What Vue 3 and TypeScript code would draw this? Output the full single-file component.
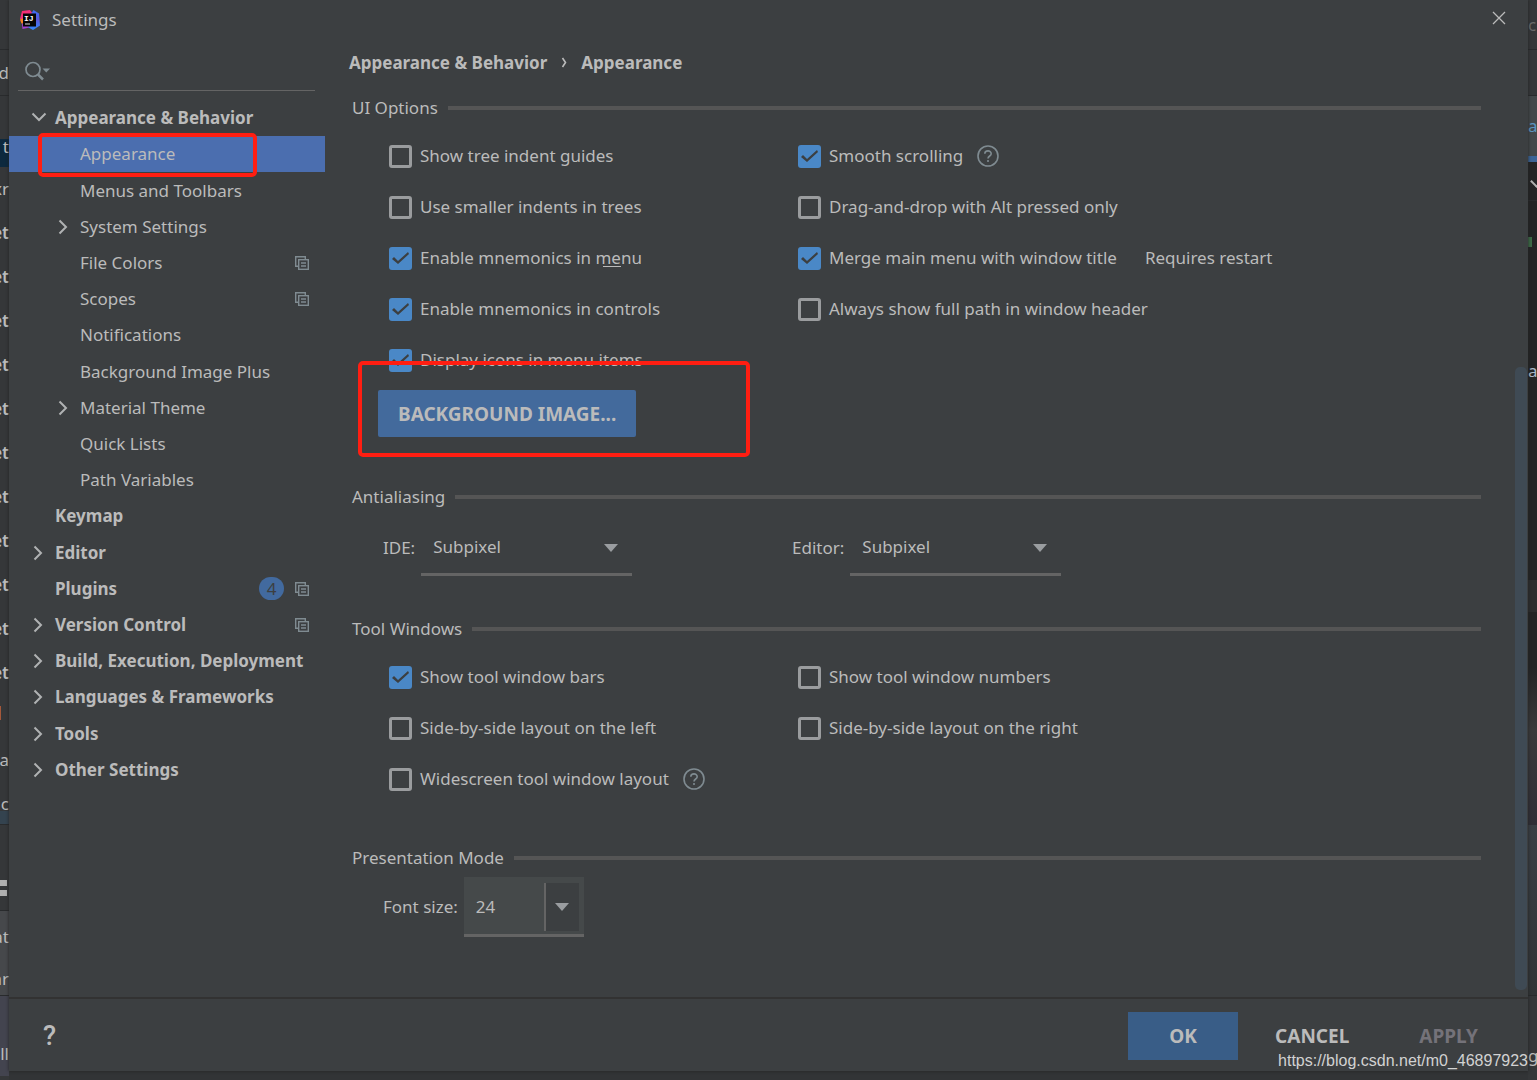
<script setup lang="ts">
import { ref } from 'vue'

interface TreeItem {
  label: string
  level: 0 | 1
  arrow?: 'open' | 'closed'
  copy?: boolean
  badge?: number
}

interface Option {
  id: string
  label: string
  checked: boolean
  help?: boolean
  note?: string
  mnemonic?: [string, string, string]
}

interface Strip {
  height: number
  text?: string
  kind?: string
}

const selected = ref('Appearance')
const query = ref('')
const ideAntialiasing = ref('Subpixel')
const editorAntialiasing = ref('Subpixel')
const fontSize = ref('24')

const tree: TreeItem[] = [
  { label: 'Appearance & Behavior', level: 0, arrow: 'open' },
  { label: 'Appearance', level: 1 },
  { label: 'Menus and Toolbars', level: 1 },
  { label: 'System Settings', level: 1, arrow: 'closed' },
  { label: 'File Colors', level: 1, copy: true },
  { label: 'Scopes', level: 1, copy: true },
  { label: 'Notifications', level: 1 },
  { label: 'Background Image Plus', level: 1 },
  { label: 'Material Theme', level: 1, arrow: 'closed' },
  { label: 'Quick Lists', level: 1 },
  { label: 'Path Variables', level: 1 },
  { label: 'Keymap', level: 0 },
  { label: 'Editor', level: 0, arrow: 'closed' },
  { label: 'Plugins', level: 0, copy: true, badge: 4 },
  { label: 'Version Control', level: 0, arrow: 'closed', copy: true },
  { label: 'Build, Execution, Deployment', level: 0, arrow: 'closed' },
  { label: 'Languages & Frameworks', level: 0, arrow: 'closed' },
  { label: 'Tools', level: 0, arrow: 'closed' },
  { label: 'Other Settings', level: 0, arrow: 'closed' },
]

const uiLeft = ref<Option[]>([
  { id: 'guides', label: 'Show tree indent guides', checked: false },
  { id: 'indents', label: 'Use smaller indents in trees', checked: false },
  { id: 'mn-menu', label: 'Enable mnemonics in menu', checked: true, mnemonic: ['Enable mnemonics in ', 'me', 'nu'] },
  { id: 'mn-controls', label: 'Enable mnemonics in controls', checked: true },
  { id: 'icons', label: 'Display icons in menu items', checked: true },
])

const uiRight = ref<Option[]>([
  { id: 'smooth', label: 'Smooth scrolling', checked: true, help: true },
  { id: 'dnd', label: 'Drag-and-drop with Alt pressed only', checked: false },
  { id: 'merge', label: 'Merge main menu with window title', checked: true, note: 'Requires restart' },
  { id: 'full-path', label: 'Always show full path in window header', checked: false },
])

const toolLeft = ref<Option[]>([
  { id: 'bars', label: 'Show tool window bars', checked: true },
  { id: 'side-left', label: 'Side-by-side layout on the left', checked: false },
  { id: 'wide', label: 'Widescreen tool window layout', checked: false, help: true },
])

const toolRight = ref<Option[]>([
  { id: 'numbers', label: 'Show tool window numbers', checked: false },
  { id: 'side-right', label: 'Side-by-side layout on the right', checked: false },
])

const leftStrips: Strip[] = [
  { height: 50, kind: 'line' },
  { height: 46, text: 'd', kind: 'line' },
  { height: 43 },
  { height: 28, text: 't', kind: 'selected raised' },
  { height: 44, text: 'xr' },
  ...Array.from({ length: 11 }, () => ({ height: 44, text: 'et', kind: 'bold' })),
  { height: 11 },
  { height: 14, kind: 'change' },
  { height: 16 },
  { height: 48, text: 'ra' },
  { height: 41, text: 'nc', kind: 'blue line' },
  { height: 54 },
  { height: 18, kind: 'squares' },
  { height: 14, kind: 'line' },
  { height: 52, text: 'at', kind: 'light' },
  { height: 33, text: 'nr', kind: 'light line' },
  { height: 36, kind: 'violet' },
  { height: 44, text: 'll', kind: 'violet' },
]

const rightStrips: Strip[] = [
  { height: 50, text: 'ce', kind: 'faint line' },
  { height: 46, kind: 'line' },
  { height: 60, text: 'a', kind: 'tab' },
  { height: 6, kind: 'tab-line' },
  { height: 39, kind: 'dark line check' },
  { height: 36, kind: 'dark' },
  { height: 10, kind: 'dark green' },
  { height: 98, kind: 'dark' },
  { height: 52, text: 'a', kind: 'dark code' },
  { height: 183, kind: 'dark' },
  { height: 32, kind: 'caret-row' },
  { height: 55, kind: 'dark' },
  { height: 158, kind: 'shade' },
  { height: 171, kind: 'slate line' },
  { height: 36 },
  { height: 48, text: 'g' },
]
</script>

<template>
  <div class="desktop">
    <div class="edge edge-left" aria-hidden="true">
      <div
        v-for="(s, i) in leftStrips"
        :key="i"
        class="strip"
        :class="s.kind"
        :style="{ height: s.height + 'px' }"
      >{{ s.text }}</div>
    </div>

    <main class="dialog">
      <header class="titlebar">
        <svg class="logo" viewBox="0 0 20 20" width="20" height="20" aria-hidden="true">
          <defs>
            <linearGradient id="lg-pink" x1="0" y1="0" x2="1" y2="1">
              <stop offset="0" stop-color="#ff2d6b" />
              <stop offset="1" stop-color="#e0338f" />
            </linearGradient>
            <linearGradient id="lg-blue" x1="0" y1="0" x2="0" y2="1">
              <stop offset="0" stop-color="#3d6df5" />
              <stop offset="0.5" stop-color="#5b57d8" />
              <stop offset="1" stop-color="#2f8cff" />
            </linearGradient>
          </defs>
          <path d="M2 1 L10 0 L13 4 L4 11 L0 9 Z" fill="url(#lg-pink)" />
          <path d="M0 9.500 L4 8 L5 14 L1.500 13.500 Z" fill="#fc801d" />
          <path d="M2 14 L5 12 L14 15 L12 17 L2.500 19 Z" fill="#a63fd0" />
          <path d="M13.500 0 L19 3.500 L20 15.500 L13 20 L8.500 17.500 L11 4 Z" fill="url(#lg-blue)" />
          <rect x="3" y="3.500" width="13" height="13" fill="#050505" />
          <text x="4" y="10.500" class="logo-text">IJ</text>
          <rect x="5" y="13.500" width="5" height="1" fill="#d8d8d8" />
        </svg>
        <h1>Settings</h1>
        <button class="close" type="button" aria-label="Close">
          <svg viewBox="0 0 12 12" width="12" height="12"><path d="M0 0 L12 12 M12 0 L0 12" /></svg>
        </button>
      </header>

      <div class="body">
        <aside class="sidebar">
          <label class="search">
            <svg viewBox="0 0 26 20" width="26" height="20" aria-hidden="true">
              <circle cx="8" cy="8.500" r="7" />
              <path d="M13 13.500 L18 18.500" class="handle" />
              <path d="M17.500 7.500 H25 L21.250 11.500 Z" class="caret" />
            </svg>
            <input v-model="query" type="text" aria-label="Search settings" />
          </label>

          <nav class="tree">
            <button
              v-for="item in tree"
              :key="item.label"
              type="button"
              class="node"
              :class="{ child: item.level === 1, selected: item.label === selected }"
              @click="selected = item.label"
            >
              <span class="arrow">
                <svg v-if="item.arrow === 'closed'" viewBox="0 0 16 16" width="16" height="16">
                  <path d="M5.500 1.500 L12 8 L5.500 14.500" />
                </svg>
                <svg v-else-if="item.arrow === 'open'" viewBox="0 0 16 16" width="16" height="16">
                  <path d="M3.500 3.500 L10 10 L16.500 3.500" />
                </svg>
              </span>
              <span class="node-label">{{ item.label }}</span>
              <span v-if="item.badge" class="badge">{{ item.badge }}</span>
              <svg v-if="item.copy" class="copy" viewBox="0 0 14 14" width="14" height="14">
                <path d="M3 10.300 H0.700 V0.700 H10.300 V3" />
                <rect x="3.700" y="3.700" width="9.600" height="9.600" />
                <path d="M6 7 H11 M6 10 H11" />
              </svg>
            </button>
            <span class="mark mark-tree"></span>
          </nav>
        </aside>

        <section class="content">
          <div class="crumbs">
            <span>Appearance &amp; Behavior</span>
            <svg viewBox="0 0 6 12" width="6" height="12" aria-hidden="true"><path d="M1.500 1 L4.500 5.500 L1.500 10" /></svg>
            <span>Appearance</span>
          </div>

          <section class="group">
            <h2>UI Options</h2>
            <div class="columns">
              <div v-for="(col, c) in [uiLeft, uiRight]" :key="c" class="column">
                <div v-for="o in col" :key="o.id" class="option">
                  <input :id="o.id" v-model="o.checked" type="checkbox" />
                  <label v-if="o.mnemonic" :for="o.id">{{ o.mnemonic[0] }}<span class="mnemonic">{{ o.mnemonic[1] }}</span>{{ o.mnemonic[2] }}</label>
                  <label v-else :for="o.id">{{ o.label }}</label>
                  <svg v-if="o.help" class="help" viewBox="0 0 22 22" width="22" height="22">
                    <circle cx="11" cy="10" r="10" />
                    <path d="M7.800 7.800 C7.800 3.900 14.200 3.900 14.200 7.700 C14.200 10 11 10 11 12.500" />
                    <path d="M11 14 V16" />
                  </svg>
                  <span v-if="o.note" class="note">{{ o.note }}</span>
                </div>
              </div>
            </div>
            <button class="background-button" type="button">BACKGROUND IMAGE...</button>
            <span class="mark mark-button"></span>
          </section>

          <section class="group">
            <h2>Antialiasing</h2>
            <div class="columns">
              <div class="field">
                <label for="aa-ide">IDE:</label>
                <span class="combo">
                  <select id="aa-ide" v-model="ideAntialiasing">
                    <option>Subpixel</option>
                    <option>Greyscale</option>
                  </select>
                  <svg class="drop" viewBox="0 0 14 8" width="14" height="8"><path d="M0 0 H14 L7 8 Z" /></svg>
                </span>
              </div>
              <div class="field">
                <label for="aa-editor">Editor:</label>
                <span class="combo">
                  <select id="aa-editor" v-model="editorAntialiasing">
                    <option>Subpixel</option>
                    <option>Greyscale</option>
                  </select>
                  <svg class="drop" viewBox="0 0 14 8" width="14" height="8"><path d="M0 0 H14 L7 8 Z" /></svg>
                </span>
              </div>
            </div>
          </section>

          <section class="group">
            <h2>Tool Windows</h2>
            <div class="columns">
              <div v-for="(col, c) in [toolLeft, toolRight]" :key="c" class="column">
                <div v-for="o in col" :key="o.id" class="option">
                  <input :id="o.id" v-model="o.checked" type="checkbox" />
                  <label :for="o.id">{{ o.label }}</label>
                  <svg v-if="o.help" class="help" viewBox="0 0 22 22" width="22" height="22">
                    <circle cx="11" cy="10" r="10" />
                    <path d="M7.800 7.800 C7.800 3.900 14.200 3.900 14.200 7.700 C14.200 10 11 10 11 12.500" />
                    <path d="M11 14 V16" />
                  </svg>
                </div>
              </div>
            </div>
          </section>

          <section class="group compact">
            <h2>Presentation Mode</h2>
            <div class="field">
              <label for="font-size">Font size:</label>
              <span class="spin">
                <input id="font-size" v-model="fontSize" type="text" />
                <button type="button" aria-label="Choose font size">
                  <svg viewBox="0 0 14 8" width="14" height="8"><path d="M0 0 H14 L7 8 Z" /></svg>
                </button>
              </span>
            </div>
          </section>
          <span class="thumb"></span>
        </section>
      </div>

      <footer class="footer">
        <button class="question" type="button" aria-label="Help">?</button>
        <button class="action primary" type="button">OK</button>
        <button class="action" type="button">CANCEL</button>
        <button class="action" type="button" disabled>APPLY</button>
      </footer>
      <span class="watermark">https://blog.csdn.net/m0_46897923</span>
    </main>

    <div class="edge edge-right" aria-hidden="true">
      <div
        v-for="(s, i) in rightStrips"
        :key="i"
        class="strip"
        :class="s.kind"
        :style="{ height: s.height + 'px' }"
      >{{ s.text }}</div>
    </div>
  </div>
</template>

<style>
body {
  background: #323436;
}
</style>

<style scoped>
.desktop {
  display: flex;
  min-height: 100vh;
  overflow: hidden;
  background: #323436;
  color: #bbbbbb;
  font-family: 'Noto Sans', 'Open Sans', sans-serif;
  font-size: 17px;
  line-height: 24px;
}

.desktop *,
.desktop *::before {
  box-sizing: border-box;
}

button,
input,
select {
  margin: 0;
  padding: 0;
  border: 0;
  border-radius: 0;
  outline: 0;
  background: none;
  color: inherit;
  font: inherit;
}

svg {
  flex: none;
  display: block;
  overflow: visible;
  fill: none;
}

/* Slices of the editor window that show on both sides of the dialog */
.edge {
  flex: 0 0 9px;
  overflow: hidden;
  background: #353739;
}

.strip {
  display: flex;
  align-items: center;
  justify-content: flex-end;
  overflow: hidden;
  white-space: nowrap;
}

.edge-right .strip {
  justify-content: flex-start;
}

.line {
  border-bottom: 1px solid #292b2d;
}

.bold {
  font-weight: 600;
}

.selected.strip {
  background: #0d293e;
}

.raised {
  align-items: flex-start;
  line-height: 16px;
}

.change {
  border-left: 1px solid #a5583a;
}

.blue {
  background: linear-gradient(#353739 27px, #34434f 27px);
}

.squares::before {
  content: '';
  flex: none;
  width: 7px;
  height: 16px;
  margin-right: 2px;
  border: solid #b0b0b0;
  border-width: 6px 0;
}

.light {
  background: #46484b;
}

.violet {
  background: #43444f;
}

.faint {
  color: #6a6a6a;
}

.tab {
  background: #43484a;
  color: #5c94bf;
}

.tab-line {
  background: #3c6496;
}

.dark {
  background: #232425;
}

.check::before {
  content: '';
  flex: none;
  width: 9px;
  height: 9px;
  margin-left: 4px;
  border: solid #b0b0b0;
  border-width: 0 2px 2px 0;
  transform: rotate(45deg);
}

.green::before {
  content: '';
  width: 4px;
  height: 10px;
  background: #3d6b48;
}

.code {
  color: #a9b7c6;
}

.caret-row {
  background: #2c2d2e;
}

.shade {
  background: linear-gradient(#232425, #3a3a3b 40%, #302e36);
}

.slate {
  background: linear-gradient(#3a3f45, #313436);
}

/* Dialog frame */
.dialog {
  position: relative;
  flex: 1;
  display: flex;
  flex-direction: column;
  min-width: 0;
  margin-bottom: 9px;
  background: #3c3f41;
  box-shadow: 0 0 3px #222222;
}

.titlebar {
  display: flex;
  align-items: center;
  height: 40px;
  padding: 0 23px 0 11px;
}

.logo-text {
  fill: #ffffff;
  font: bold 8px 'Liberation Mono', monospace;
}

h1 {
  flex: 1;
  margin: 0 0 0 12px;
  font-size: 17px;
  font-weight: 400;
}

.close {
  padding: 0 0 4px;
}

.close path {
  stroke: #bbbbbb;
  stroke-width: 1.3;
}

.body {
  flex: 1;
  display: flex;
}

/* Category tree */
.sidebar {
  flex: 0 0 316px;
}

.search {
  display: flex;
  align-items: center;
  height: 51px;
  margin: 0 10px 0 9px;
  padding: 12px 0 0 7px;
  border-bottom: 1px solid #646464;
}

.search svg {
  stroke: #7f8b91;
  stroke-width: 1.7;
}

.search .handle {
  stroke-width: 2.5;
}

.search .caret {
  fill: #7f8b91;
  stroke: none;
}

.search input {
  flex: 1;
  min-width: 0;
  margin-left: 6px;
}

.tree {
  position: relative;
  display: flex;
  flex-direction: column;
  height: 688px;
  margin-top: 9px;
}

.node {
  flex: 1;
  display: flex;
  align-items: center;
  padding: 0 16px 0 20px;
  font-weight: 700;
  text-align: left;
  white-space: nowrap;
}

.node.child {
  padding-left: 45px;
  font-weight: 400;
}

.node.selected {
  background: #4b6eaf;
}

.arrow {
  flex: 0 0 26px;
}

.arrow path {
  stroke: #b0b2b3;
  stroke-width: 2;
}

.node-label {
  flex: 1;
}

.badge {
  width: 25px;
  margin-right: 11px;
  border-radius: 12px;
  background: #426a9f;
  color: #3c3f41;
  font-weight: 400;
  line-height: 23px;
  text-align: center;
}

.copy {
  stroke: #7f8b91;
  stroke-width: 1.4;
}

.mark {
  position: absolute;
  border: 4px solid #ff1e12;
  border-radius: 5px;
  pointer-events: none;
}

.mark-tree {
  top: 33px;
  left: 29px;
  width: 219px;
  height: 44px;
}

/* Settings page */
.content {
  position: relative;
  flex: 1;
  min-width: 0;
  padding: 11px 47px 0 27px;
}

.crumbs {
  display: flex;
  align-items: center;
  gap: 14px;
  height: 24px;
  margin: 0 0 20px -3px;
  font-weight: 700;
}

.crumbs path {
  stroke: #bbbbbb;
  stroke-width: 1.6;
}

.group {
  position: relative;
  margin-bottom: 40px;
}

h2 {
  display: flex;
  align-items: center;
  gap: 10px;
  height: 26px;
  margin: 0 0 10px;
  font-size: 17px;
  font-weight: 400;
  white-space: nowrap;
}

h2::after {
  content: '';
  flex: 1;
  height: 4px;
  background: #555555;
}

.columns {
  display: grid;
  grid-template-columns: 409px 1fr;
}

.option {
  display: flex;
  align-items: center;
  height: 51px;
  padding-left: 37px;
  white-space: nowrap;
}

.option label {
  padding: 0 0 2px 8px;
}

.option input {
  flex: none;
  width: 23px;
  height: 23px;
  border: 3px solid #9a9c9e;
  border-radius: 3px;
  appearance: none;
}

.option input:checked {
  border: 0;
  background: #4a88c7;
}

.option input:checked::before {
  content: '';
  display: block;
  height: 23px;
  background: #3c3f41;
  clip-path: polygon(3px 12px, 5px 10px, 9px 14px, 19px 5px, 20px 7px, 9px 17px);
}

.mnemonic {
  position: relative;
}

.mnemonic::after {
  content: '';
  position: absolute;
  right: 0;
  bottom: 2px;
  left: 8px;
  height: 1px;
  background: #bbbbbb;
}

.help {
  margin-left: 14px;
  stroke: #7f8b91;
  stroke-width: 1.6;
}

.note {
  padding: 0 0 2px;
  margin-left: 28px;
}

.background-button {
  display: block;
  height: 47px;
  margin: 4px 0 47px 26px;
  padding: 0 20px;
  border-radius: 2px;
  background: #436a9c;
  font-size: 19px;
  font-weight: 700;
}

.mark-button {
  top: 266px;
  left: 6px;
  width: 392px;
  height: 96px;
}

.field {
  display: flex;
  align-items: center;
  gap: 6px;
  padding-left: 31px;
}

.combo {
  position: relative;
  width: 211px;
  height: 56px;
}

.combo select {
  width: 100%;
  height: 100%;
  padding-left: 12px;
  border: solid #646464;
  border-width: 0 0 3px;
  appearance: none;
}

option {
  background: #3c3f41;
}

.drop {
  position: absolute;
  top: 24px;
  right: 14px;
  pointer-events: none;
}

.drop path,
.spin path {
  fill: #9a9da0;
}

.compact {
  margin-bottom: 0;
}

.compact h2 {
  margin-bottom: 6px;
}

.spin {
  display: flex;
  width: 120px;
  height: 60px;
  padding: 6px 5px 3px 0;
  border-bottom: 3px solid #646464;
  background: #45494a;
}

.spin input {
  flex: 1;
  min-width: 0;
  padding-left: 12px;
}

.spin button {
  display: flex;
  align-items: center;
  justify-content: center;
  width: 35px;
  border-left: 2px solid #646464;
  background: #3c3f41;
}

.thumb {
  position: absolute;
  top: 327px;
  right: 1px;
  bottom: 7px;
  width: 12px;
  border-radius: 5px;
  background: #3f4a54;
}

/* Bottom bar */
.footer {
  display: flex;
  align-items: center;
  height: 74px;
  padding: 2px 15px 0 0;
  border-top: 2px solid #323232;
}

.question {
  margin-right: auto;
  padding-left: 34px;
  font-family: Roboto, sans-serif;
  font-size: 27px;
  font-weight: 500;
}

.action {
  height: 48px;
  padding: 0 35px;
  font-size: 19px;
  font-weight: 700;
}

.primary {
  width: 110px;
  margin-right: 2px;
  background: #395d87;
}

.action:disabled {
  color: #747279;
}

.watermark {
  position: absolute;
  right: 0;
  bottom: 1px;
  color: #d2d2d2;
  font-family: 'Liberation Sans', Arial, sans-serif;
  font-size: 16px;
  line-height: 18px;
}
</style>
